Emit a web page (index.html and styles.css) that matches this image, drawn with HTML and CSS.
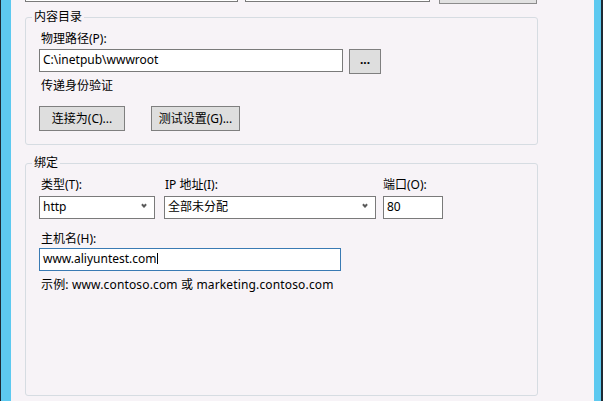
FILE: index.html
```html
<!DOCTYPE html>
<html lang="zh-CN">
<head>
<meta charset="utf-8">
<title>添加网站</title>
<link rel="stylesheet" href="styles.css">
</head>
<body>
<div class="frame">
  <div class="inner">
    <div class="content">
      <div class="toprow">
        <div class="cut cut-a"></div>
        <div class="cut cut-b"></div>
        <div class="cut cut-btn"></div>
      </div>

      <div class="group group-dir">
        <span class="legend">内容目录</span>
        <div class="label">物理路径(P):</div>
        <div class="row row-path">
          <div class="textbox tb-path">C:\inetpub\wwwroot</div>
          <div class="btn btn-browse">...</div>
        </div>
        <div class="label label-pass">传递身份验证</div>
        <div class="row row-btns">
          <div class="btn btn-connect">连接为(C)...</div>
          <div class="btn btn-test">测试设置(G)...</div>
        </div>
      </div>

      <div class="group group-bind">
        <span class="legend">绑定</span>
        <div class="bind-grid">
          <div class="label lbl-type">类型(T):</div>
          <div class="label lbl-ip">IP 地址(I):</div>
          <div class="label lbl-port">端口(O):</div>
          <div class="textbox select sel-type">http<span class="chev"></span></div>
          <div class="textbox select sel-ip">全部未分配<span class="chev"></span></div>
          <div class="textbox tb-port">80</div>
        </div>
        <div class="label lbl-host">主机名(H):</div>
        <div class="textbox tb-host">www.aliyuntest.com<span class="caret"></span></div>
        <div class="label lbl-example">示例: www.contoso.com 或 marketing.contoso.com</div>
      </div>
    </div>
  </div>
</div>
</body>
</html>
```

FILE: styles.css
```css
* { box-sizing: border-box; }
html, body {
  margin: 0;
  padding: 0;
  width: 603px;
  height: 401px;
  overflow: hidden;
  background: #f7f3f7;
}
body {
  font-family: "Noto Sans", "Noto Sans CJK SC", sans-serif;
  font-size: 12px;
  line-height: 16px;
  color: #000;
}
.frame {
  height: 401px;
  border-left: 1px solid #1e2a33;
  border-right: 2px solid #1e2a33;
}
.inner {
  height: 100%;
  border-left: 10px solid #5dc9f0;
  border-right: 7px solid #5dc9f0;
  background: #f7f3f7;
}
.content {
  padding-left: 14px;
  width: 526px;
}
.toprow {
  display: flex;
  height: 4px;
  align-items: flex-start;
}
.cut {
  border: 1px solid #7a7a7a;
  border-top: none;
  background: #fff;
}
.cut-a { width: 213px; height: 2px; }
.cut-b { width: 186px; height: 2px; margin-left: 7px; }
.cut-btn { width: 98px; height: 4px; margin-left: 9px; background: #e1e1e1; border-color: #8c8c8c; }

.group {
  position: relative;
  width: 513px;
  border: 1px solid #d6dce2;
  border-radius: 3px;
  padding-left: 13px;
}
.group-dir { height: 128px; margin-top: 13px; padding-top: 13px; }
.group-bind { height: 233px; margin-top: 18px; padding-top: 13px; }
.legend {
  position: absolute;
  top: -9px;
  left: 6px;
  padding: 0 2px;
  background: #f7f3f7;
  line-height: 16px;
}
.label { height: 16px; padding-left: 2px; white-space: nowrap; }
.row { display: flex; align-items: flex-start; }
.textbox {
  background: #fff;
  border: 1px solid #7a7a7a;
  height: 23px;
  line-height: 20px;
  padding-left: 3px;
  white-space: nowrap;
  position: relative;
}
.row-path { margin-top: 2px; }
.tb-path { width: 304px; }
.btn {
  background: #dedede;
  border: 1px solid #7f7f7f;
  height: 25px;
  display: flex;
  align-items: center;
  justify-content: center;
  white-space: nowrap;
}
.btn-browse { width: 32px; margin-left: 6px; font-weight: bold; padding-bottom: 3px; }
.label-pass { margin-top: 4px; }
.row-btns { margin-top: 12px; gap: 26px; }
.btn-connect { width: 86px; }
.btn-test { width: 89px; }

.bind-grid {
  display: grid;
  grid-template-columns: 116px 212px 58px;
  column-gap: 9px;
  row-gap: 3px;
}
.bind-grid > :nth-child(3n) { margin-left: -2px; }
.lbl-ip { padding-left: 1px; }
.lbl-port { padding-left: 0; }
.select { padding-right: 20px; }
.chev {
  position: absolute;
  right: 8px;
  top: 6px;
  width: 4px;
  height: 4px;
  border-right: 2px solid #5a5a5a;
  border-bottom: 2px solid #5a5a5a;
  transform: rotate(45deg);
}
.lbl-host { margin-top: 12px; }
.tb-host { width: 302px; margin-top: 1px; border-color: #3a7ab3; }
.caret {
  display: inline-block;
  width: 1px;
  height: 11px;
  background: #000;
  vertical-align: -1px;
  margin-left: 0;
}
.lbl-example { margin-top: 6px; letter-spacing: 0.15px; }
```
